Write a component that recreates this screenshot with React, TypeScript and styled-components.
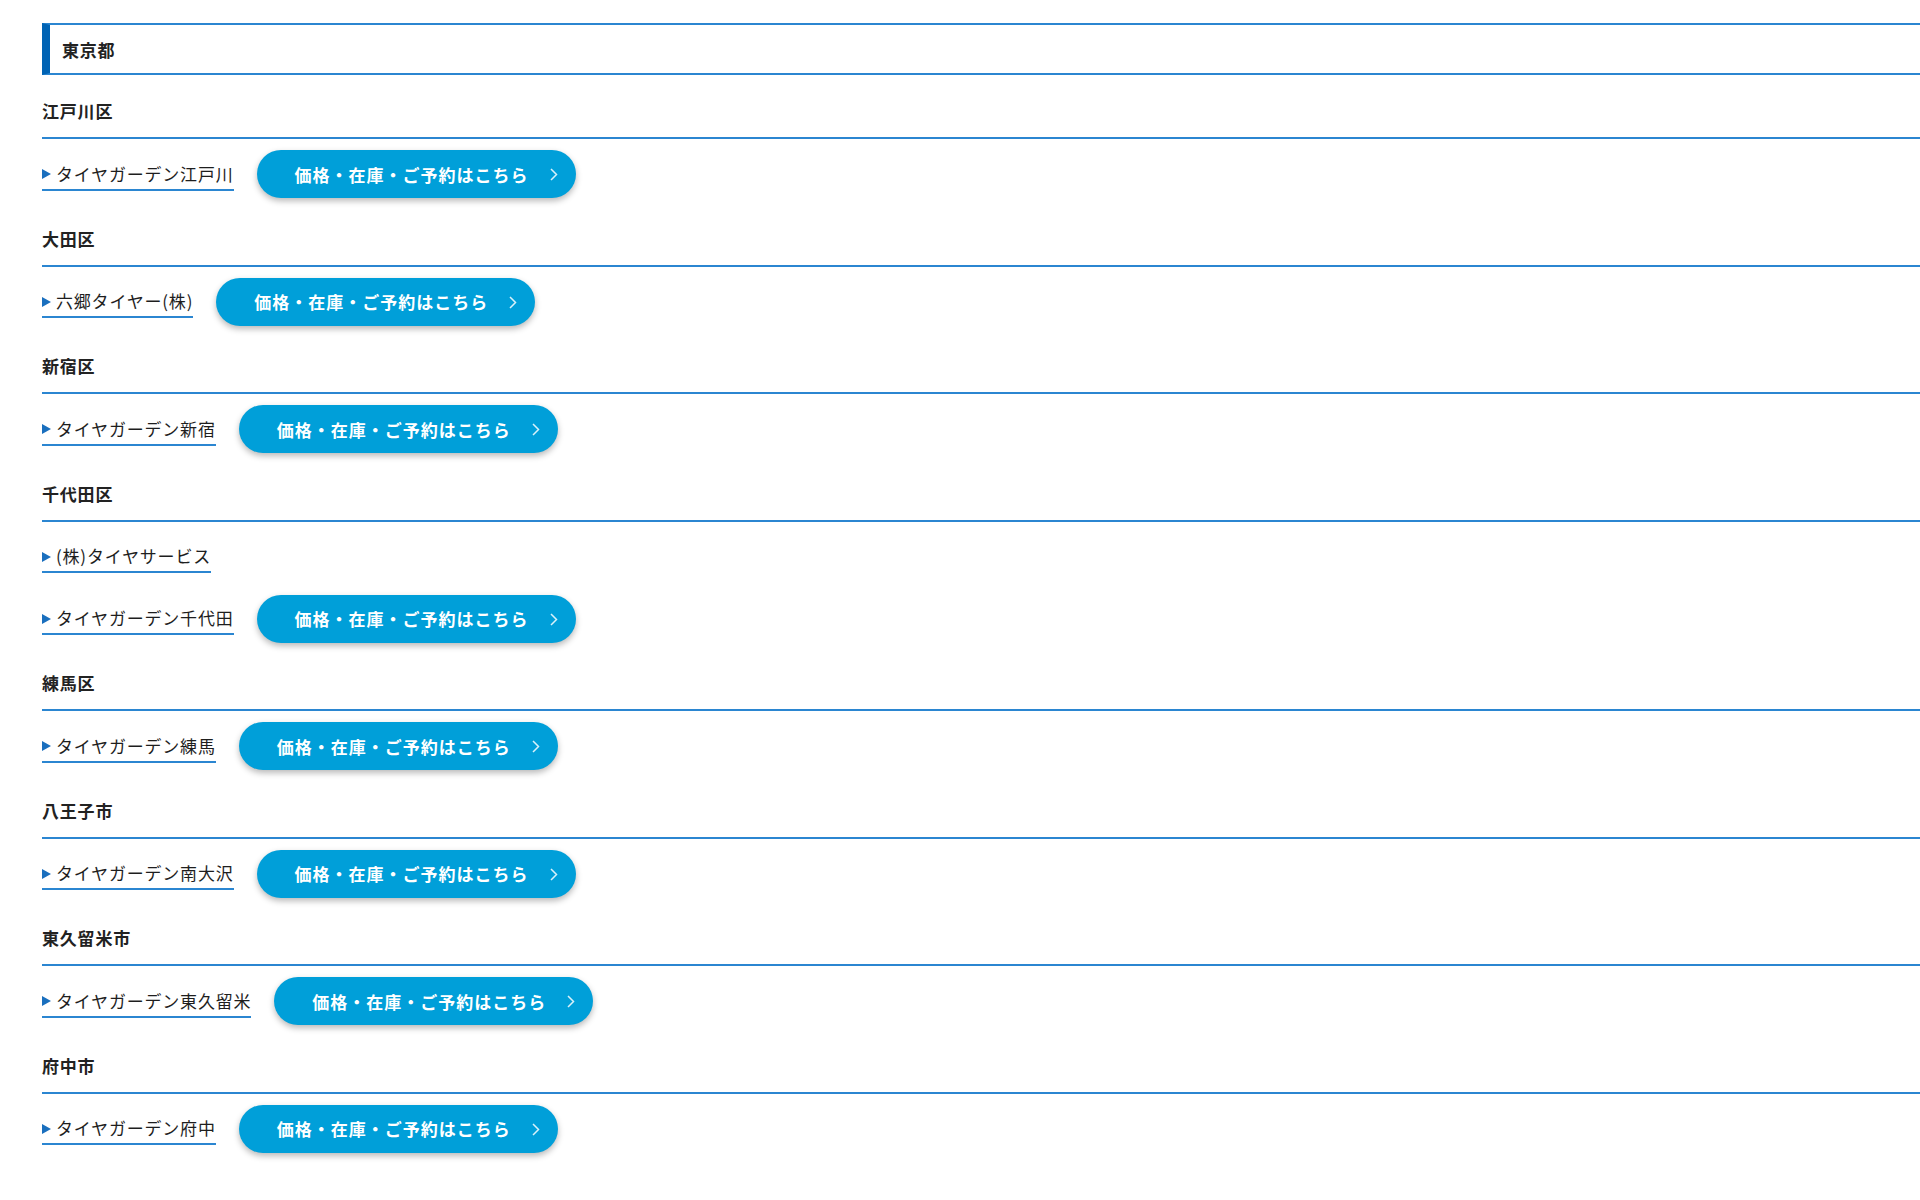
import React from 'react';
import styled, { createGlobalStyle } from 'styled-components';

const GlobalStyle = createGlobalStyle`
  html, body {
    margin: 0;
    padding: 0;
    background: #ffffff;
  }
  body {
    font-family: "Noto Sans CJK JP", "Noto Sans", sans-serif;
    color: #222222;
    overflow-x: hidden;
  }
  ul {
    list-style: none;
    margin: 0;
    padding: 0;
  }
`;

const ShopListSection = styled.section`
  padding: 23px 0 40px 42px;
`;

const PrefTitle = styled.h2`
  margin: 0 0 24px;
  padding: 13px 0 11px 12px;
  border-top: 2px solid #2b86d1;
  border-bottom: 2px solid #2b86d1;
  border-left: 8px solid #0063b4;
  font-size: 17px;
  line-height: 24px;
  letter-spacing: 0.8px;
  font-weight: 700;
`;

const AreaBlock = styled.div``;

const AreaTitle = styled.h3`
  margin: 0;
  padding: 0 0 14px;
  border-bottom: 2px solid #2b86d1;
  font-size: 17px;
  line-height: 24px;
  letter-spacing: 0.8px;
  font-weight: 700;
`;

const ShopList = styled.ul`
  padding: 11px 0 28.5px;
  display: flex;
  flex-direction: column;
  gap: 14px;
`;

const ShopRow = styled.li`
  display: flex;
  align-items: center;
  gap: 23px;
  min-height: 48px;
`;

const ShopLink = styled.a`
  display: inline-flex;
  align-items: center;
  gap: 5px;
  padding: 4px 0 3px;
  border-bottom: 2px solid #2b86d1;
  color: #1e1e1e;
  text-decoration: none;
  font-size: 17px;
  line-height: 24px;
  letter-spacing: 0.8px;

  &::before {
    content: '';
    width: 0;
    height: 0;
    border-top: 5.5px solid transparent;
    border-bottom: 5.5px solid transparent;
    border-left: 9px solid #1a6fbe;
    margin-top: 1px;
  }
`;

const ReserveButton = styled.a`
  position: relative;
  display: inline-flex;
  align-items: center;
  height: 48px;
  padding: 0 47px 0 38px;
  border-radius: 24px;
  background: #009fd9;
  color: #ffffff;
  text-decoration: none;
  font-size: 17px;
  font-weight: 700;
  letter-spacing: 1px;
  box-shadow: 0 3px 6px rgba(0, 0, 0, 0.28);

  svg {
    position: absolute;
    right: 18px;
    top: 50%;
    width: 8px;
    height: 13px;
    margin-top: -6px;
  }
`;

type Shop = { name: string; reserve: boolean };
type Area = { name: string; shops: Shop[] };

const areas: Area[] = [
  { name: '江戸川区', shops: [{ name: 'タイヤガーデン江戸川', reserve: true }] },
  { name: '大田区', shops: [{ name: '六郷タイヤー(株)', reserve: true }] },
  { name: '新宿区', shops: [{ name: 'タイヤガーデン新宿', reserve: true }] },
  {
    name: '千代田区',
    shops: [
      { name: '(株)タイヤサービス', reserve: false },
      { name: 'タイヤガーデン千代田', reserve: true },
    ],
  },
  { name: '練馬区', shops: [{ name: 'タイヤガーデン練馬', reserve: true }] },
  { name: '八王子市', shops: [{ name: 'タイヤガーデン南大沢', reserve: true }] },
  { name: '東久留米市', shops: [{ name: 'タイヤガーデン東久留米', reserve: true }] },
  { name: '府中市', shops: [{ name: 'タイヤガーデン府中', reserve: true }] },
];

const Chevron = () => (
  <svg viewBox="0 0 8 13" fill="none" xmlns="http://www.w3.org/2000/svg">
    <path d="M1 1L6.5 6.5L1 12" stroke="rgba(255,255,255,0.85)" strokeWidth="1.5" />
  </svg>
);

const App: React.FC = () => {
  return (
    <>
      <GlobalStyle />
      <ShopListSection>
        <PrefTitle>東京都</PrefTitle>
        {areas.map((area) => (
          <AreaBlock key={area.name}>
            <AreaTitle>{area.name}</AreaTitle>
            <ShopList>
              {area.shops.map((shop) => (
                <ShopRow key={shop.name}>
                  <ShopLink href="#">{shop.name}</ShopLink>
                  {shop.reserve && (
                    <ReserveButton href="#">
                      価格・在庫・ご予約はこちら
                      <Chevron />
                    </ReserveButton>
                  )}
                </ShopRow>
              ))}
            </ShopList>
          </AreaBlock>
        ))}
      </ShopListSection>
    </>
  );
};

export default App;
